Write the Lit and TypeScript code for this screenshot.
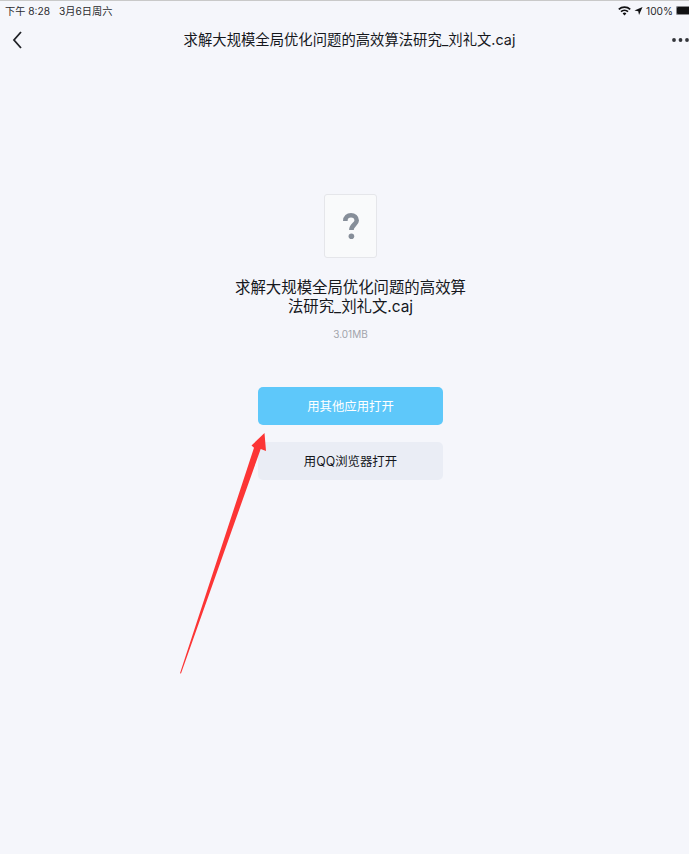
import { LitElement, css, html } from 'lit';
import { customElement } from 'lit/decorators.js';

const FILE_NAME = '求解大规模全局优化问题的高效算法研究_刘礼文.caj';

@customElement('app-root')
export class AppRoot extends LitElement {
  static styles = css`
    :host {
      display: block;
      position: relative;
      width: 689px;
      height: 854px;
      overflow: hidden;
      background: #f5f6fb;
      color: #16181d;
      font-family: Inter, "Noto Sans CJK SC", "Liberation Sans", sans-serif;
    }
    .status {
      display: flex;
      align-items: center;
      justify-content: space-between;
      box-sizing: border-box;
      height: 20px;
      padding: 0 0 0 5px;
      border-top: 1px solid #c9c9c9;
      font-size: 10.2px;
      color: #2a2a2e;
    }
    .status-left {
      display: flex;
      gap: 9px;
    }
    .status-right {
      display: flex;
      align-items: center;
      gap: 3px;
    }
    .battery {
      box-sizing: border-box;
      width: 13px;
      height: 9px;
      border: 1px solid #8a8a8e;
      border-right: none;
      border-radius: 2px 0 0 2px;
      background: #111113;
    }
    .nav {
      display: flex;
      align-items: center;
      justify-content: space-between;
      box-sizing: border-box;
      height: 40px;
      padding: 0 0 0 12px;
    }
    .nav-title {
      font-size: 14.35px;
      line-height: 18px;
      margin: 0 0 1px 5px;
    }
    .content {
      display: flex;
      flex-direction: column;
      align-items: center;
      padding: 134px 0 0 12px;
    }
    .file-icon {
      display: flex;
      align-items: center;
      justify-content: center;
      box-sizing: border-box;
      width: 53px;
      height: 64px;
      background: #f9fafb;
      border: 1px solid #e5e6ea;
      border-radius: 3px;
    }
    .file-name {
      width: 236px;
      margin-top: 21px;
      font-size: 15.4px;
      line-height: 18.5px;
      text-align: center;
    }
    .size {
      margin-top: 11px;
      font-size: 10px;
      line-height: 14px;
      color: #a1a4ab;
    }
    .btn {
      display: flex;
      align-items: center;
      justify-content: center;
      width: 185px;
      height: 38px;
      border: none;
      border-radius: 5px;
      padding: 0 0 1px;
      font: inherit;
      font-size: 12.4px;
    }
    .btn.primary {
      margin-top: 46px;
      background: #5ec8fa;
      color: #fff;
    }
    .btn.secondary {
      margin-top: 17px;
      background: #eaedf5;
      color: #16181d;
    }
    .arrow {
      position: absolute;
      left: 0;
      top: 0;
      pointer-events: none;
    }
  `;

  render() {
    return html`
      <div class="status">
        <div class="status-left"><span>下午 8:28</span><span>3月6日周六</span></div>
        <div class="status-right">
          <svg width="13" height="10" viewBox="0 0 13 10" fill="#111113">
            <path d="M6.5 9.5 4.6 7.4a2.8 2.8 0 0 1 3.8 0ZM3.6 6.300 2.400 5a6 6 0 0 1 8.200 0L9.400 6.300a4.300 4.300 0 0 0-5.800 0ZM1.400 4 .2 2.700a9.200 9.200 0 0 1 12.600 0L11.600 4a7.500 7.500 0 0 0-10.200 0Z"/>
          </svg>
          <svg width="9" height="10" viewBox="0 0 10 10" fill="#111113">
            <path d="M9.500.5 5.600 9.500 4.700 5.300.5 4.400Z"/>
          </svg>
          <span>100%</span>
          <div class="battery"></div>
        </div>
      </div>
      <div class="nav">
        <svg width="11" height="18" viewBox="0 0 11 18" fill="none" stroke="#1f2126" stroke-width="1.8">
          <path d="M9 1 2 9l7 8"/>
        </svg>
        <div class="nav-title">${FILE_NAME}</div>
        <svg width="18" height="6" viewBox="0 0 18 6" fill="#33353a">
          <circle cx="3" cy="3" r="1.900"/><circle cx="9.500" cy="3" r="1.900"/><circle cx="16" cy="3" r="1.900"/>
        </svg>
      </div>
      <div class="content">
        <div class="file-icon">
          <svg width="16" height="26" viewBox="0 0 16 26" fill="none">
            <path d="M2.300 8C2.300 4 4.800 2.300 8 2.300s5.700 2 5.700 5.200c0 4-5.300 4.300-5.300 9.500" stroke="#868e99" stroke-width="4.600"/>
            <circle cx="8.400" cy="23.200" r="2.800" fill="#868e99"/>
          </svg>
        </div>
        <div class="file-name">${FILE_NAME}</div>
        <div class="size">3.01MB</div>
        <button class="btn primary">用其他应用打开</button>
        <button class="btn secondary">用QQ浏览器打开</button>
      </div>
      <svg class="arrow" width="689" height="854" viewBox="0 0 689 854">
        <path d="M264.500 433 L266 451 L260.700 449 L181 673.500 L180 673.200 L254 447.700 L251.500 445.500 Z" fill="#fc3535"/>
      </svg>
    `;
  }
}
